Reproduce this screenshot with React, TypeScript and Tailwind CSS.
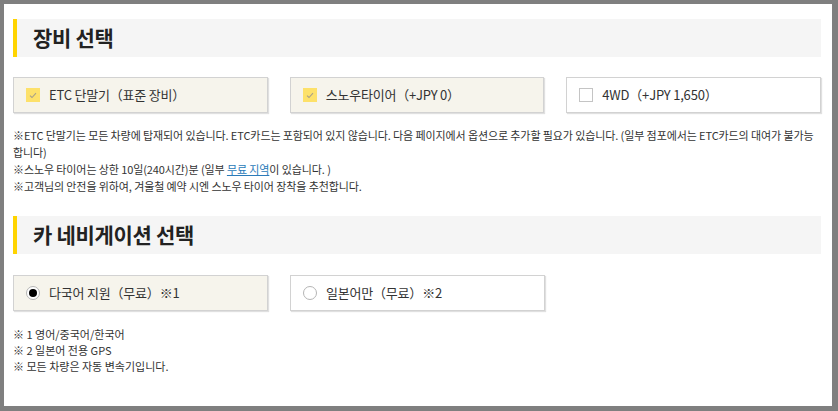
import React from "react";

const font = { fontFamily: '"Noto Sans CJK KR", "Noto Sans", sans-serif' };

function SectionTitle({ children }: { children: React.ReactNode }) {
  return <div className="flex h-[38px] items-center border-l-4 border-[#ffd400] bg-[#f5f5f5] pl-4">
    <h2 className="text-[21px] font-bold tracking-[-0.3px] text-[#222]">{children}</h2>
  </div>;
}

function CheckBox({ checked }: { checked: boolean }) {
  if (!checked) return <span className="h-[14px] w-[14px] shrink-0 border border-[#c4c4c4] bg-white" />;
  return <span className="flex h-[14px] w-[14px] shrink-0 items-center justify-center bg-[#fde16a]">
    <svg width="8" height="7" viewBox="0 0 8 7"><path d="M1 3.6 L3 5.5 L7 1.2" fill="none" stroke="#a8a08a" strokeWidth="1.1" /></svg>
  </span>;
}

function Radio({ checked }: { checked: boolean }) {
  return <span className="flex h-[14px] w-[14px] shrink-0 items-center justify-center rounded-full border border-[#b5b5b5] bg-white">
    {checked && <span className="h-[8px] w-[8px] rounded-full bg-black" />}
  </span>;
}

function Option({ selected, control, label }: { selected: boolean; control: React.ReactNode; label: string }) {
  return <div className={`flex h-[36px] w-[255px] items-center gap-[9px] border border-[#d2d2d2] pl-3 shadow-[1px_1px_1px_rgba(0,0,0,0.12)] ${selected ? "bg-[#f6f4ec]" : "bg-white"}`}>
    {control}
    <span className="text-[13px] tracking-[-0.2px] text-[#333]">{label}</span>
  </div>;
}

export default function App() {
  return <div className="h-[411px] w-[838px] bg-[#7f7f7f] pb-[5px] pl-[4px] pr-[6px] pt-[4px]" style={font}>
    <div className="h-full bg-white pl-[9px] pr-[11px] pt-[15px]">
      <SectionTitle>장비 선택</SectionTitle>
      <div className="mt-5 flex gap-[22px]">
        <Option selected control={<CheckBox checked />} label="ETC 단말기（표준 장비）" />
        <Option selected control={<CheckBox checked />} label="스노우타이어（+JPY 0）" />
        <Option selected={false} control={<CheckBox checked={false} />} label="4WD（+JPY 1,650）" />
      </div>
      <div className="mt-[14px] text-[11px] leading-[17px] tracking-[-0.1px] text-[#333]">
        <p>※ETC 단말기는 모든 차량에 탑재되어 있습니다. ETC카드는 포함되어 있지 않습니다. 다음 페이지에서 옵션으로 추가할 필요가 있습니다. (일부 점포에서는 ETC카드의 대여가 불가능합니다)</p>
        <p>※스노우 타이어는 상한 10일(240시간)분 (일부 <a className="text-[#2b7bb9] underline">무료 지역</a>이 있습니다. )</p>
        <p>※고객님의 안전을 위하여, 겨울철 예약 시엔 스노우 타이어 장착을 추천합니다.</p>
      </div>
      <div className="mt-[21px]">
        <SectionTitle>카 네비게이션 선택</SectionTitle>
      </div>
      <div className="mt-[21px] flex gap-[22px]">
        <Option selected control={<Radio checked />} label="다국어 지원（무료）※1" />
        <Option selected={false} control={<Radio checked={false} />} label="일본어만（무료）※2" />
      </div>
      <div className="mt-[15px] text-[11px] leading-[16px] text-[#333]">
        <p>※ 1 영어/중국어/한국어</p>
        <p>※ 2 일본어 전용 GPS</p>
        <p>※ 모든 차량은 자동 변속기입니다.</p>
      </div>
    </div>
  </div>;
}
